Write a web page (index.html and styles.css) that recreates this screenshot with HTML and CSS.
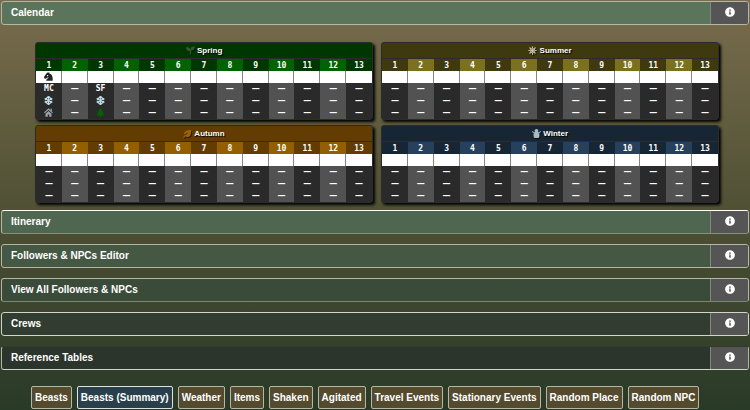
FILE: index.html
```html
<!DOCTYPE html>
<html lang="en">
<head>
<meta charset="utf-8">
<title>Calendar</title>
<link rel="stylesheet" href="styles.css">
</head>
<body>
<svg class="defs" aria-hidden="true">
  <symbol id="info" viewBox="0 0 512 512"><path d="M256 8C119.043 8 8 119.083 8 256c0 136.997 111.043 248 248 248s248-111.003 248-248C504 119.083 392.957 8 256 8zm0 110c23.196 0 42 18.804 42 42s-18.804 42-42 42-42-18.804-42-42 18.804-42 42-42zm56 254c0 6.627-5.373 12-12 12h-88c-6.627 0-12-5.373-12-12v-24c0-6.627 5.373-12 12-12h12v-64h-12c-6.627 0-12-5.373-12-12v-24c0-6.627 5.373-12 12-12h64c6.627 0 12 5.373 12 12v100h12c6.627 0 12 5.373 12 12v24z"/></symbol>
  <symbol id="seedling" viewBox="0 0 512 512"><path d="M64 64H0c0 134 100 234 214 234v160c0 12 7 22 20 22h44c12 0 20-10 20-22V298C298 174 188 64 64 64zm384-32c-84 0-157 46-196 114 28 31 49 68 60 130 113-12 200-118 200-244z"/></symbol>
  <symbol id="sun" viewBox="0 0 24 24"><circle cx="12" cy="12" r="7"/><path fill="none" stroke="currentColor" stroke-width="3" d="M12 1v22M1 12h22M4 4l16 16M20 4L4 20"/><circle cx="12" cy="12" r="5" fill="none" stroke="#3e390f" stroke-width="1"/></symbol>
  <symbol id="leaf" viewBox="0 0 24 24"><path d="M23 1c-3 2-5 1-9 2C6 4 2 8 3 15l9-5 1 1-9 6-4 5 2 2 4-4c7 3 13 1 15-7 1-5 0-8 2-12z"/></symbol>
  <symbol id="snowman" viewBox="0 0 24 24"><path d="M12 0c3 0 5 2 5 5l-1 3 3 1 3-4 2 1-3 5-3 1c2 2 2 3 2 5 0 3-1 5-3 7H7c-2-2-3-4-3-7 0-2 0-3 2-5l-3-1-3-5 2-1 3 4 3-1-1-3c0-3 2-5 5-5z"/></symbol>
  <symbol id="horse" viewBox="0 0 24 24"><path fill-rule="evenodd" d="M15 1l-1 3c6 1 8 6 9 11v8H6c0-4 3-5 7-9l-5 1-3 3-4-1-1-4 5-7c2-4 5-5 10-4zM8 8v3h3V8z"/></symbol>
  <symbol id="snowflake" viewBox="0 0 24 24"><path fill="none" stroke="currentColor" stroke-width="3" d="M12 0v24M2 6l20 12M22 6L2 18M8 2l4 4 4-4M8 22l4-4 4 4M2 10l5-1V4M22 10l-5-1V4M2 14l5 1v5M22 14l-5 1v5"/></symbol>
  <symbol id="house" viewBox="0 0 24 24"><path fill="none" stroke="currentColor" stroke-width="3" d="M1 13L12 3l11 10"/><path d="M17 2h4v7l-4-4zM12 8l8 7v8h-6v-6h-4v6H4v-8z"/></symbol>
  <symbol id="tree" viewBox="0 0 24 24"><path d="M12 0l6 7h-2l4 6h-2l5 7h-9v4h-4v-4H1l5-7H4l4-6H6z"/></symbol>
</svg>

<main>
  <div class="bar calendar-bar">
    <button class="bar-title" type="button">Calendar</button>
    <button class="bar-info" type="button" aria-label="Calendar help"><svg class="info-icon"><use href="#info"/></svg></button>
  </div>

  <section class="seasons">
    <table class="season spring">
      <thead>
        <tr class="season-name"><th colspan="13"><svg class="icon"><use href="#seedling"/></svg> Spring</th></tr>
        <tr class="days"><th>1</th><th>2</th><th>3</th><th>4</th><th>5</th><th>6</th><th>7</th><th>8</th><th>9</th><th>10</th><th>11</th><th>12</th><th>13</th></tr>
      </thead>
      <tbody>
        <tr class="marker"><td><svg class="icon horse"><use href="#horse"/></svg></td><td></td><td></td><td></td><td></td><td></td><td></td><td></td><td></td><td></td><td></td><td></td><td></td></tr>
        <tr><td><span class="code">MC</span></td><td>—</td><td><span class="code">SF</span></td><td>—</td><td>—</td><td>—</td><td>—</td><td>—</td><td>—</td><td>—</td><td>—</td><td>—</td><td>—</td></tr>
        <tr><td><svg class="icon snow"><use href="#snowflake"/></svg></td><td>—</td><td><svg class="icon snow"><use href="#snowflake"/></svg></td><td>—</td><td>—</td><td>—</td><td>—</td><td>—</td><td>—</td><td>—</td><td>—</td><td>—</td><td>—</td></tr>
        <tr><td><svg class="icon house"><use href="#house"/></svg></td><td>—</td><td><svg class="icon tree"><use href="#tree"/></svg></td><td>—</td><td>—</td><td>—</td><td>—</td><td>—</td><td>—</td><td>—</td><td>—</td><td>—</td><td>—</td></tr>
      </tbody>
    </table>

    <table class="season summer">
      <thead>
        <tr class="season-name"><th colspan="13"><svg class="icon"><use href="#sun"/></svg> Summer</th></tr>
        <tr class="days"><th>1</th><th>2</th><th>3</th><th>4</th><th>5</th><th>6</th><th>7</th><th>8</th><th>9</th><th>10</th><th>11</th><th>12</th><th>13</th></tr>
      </thead>
      <tbody>
        <tr class="marker"><td></td><td></td><td></td><td></td><td></td><td></td><td></td><td></td><td></td><td></td><td></td><td></td><td></td></tr>
        <tr><td>—</td><td>—</td><td>—</td><td>—</td><td>—</td><td>—</td><td>—</td><td>—</td><td>—</td><td>—</td><td>—</td><td>—</td><td>—</td></tr>
        <tr><td>—</td><td>—</td><td>—</td><td>—</td><td>—</td><td>—</td><td>—</td><td>—</td><td>—</td><td>—</td><td>—</td><td>—</td><td>—</td></tr>
        <tr><td>—</td><td>—</td><td>—</td><td>—</td><td>—</td><td>—</td><td>—</td><td>—</td><td>—</td><td>—</td><td>—</td><td>—</td><td>—</td></tr>
      </tbody>
    </table>

    <table class="season autumn">
      <thead>
        <tr class="season-name"><th colspan="13"><svg class="icon"><use href="#leaf"/></svg> Autumn</th></tr>
        <tr class="days"><th>1</th><th>2</th><th>3</th><th>4</th><th>5</th><th>6</th><th>7</th><th>8</th><th>9</th><th>10</th><th>11</th><th>12</th><th>13</th></tr>
      </thead>
      <tbody>
        <tr class="marker"><td></td><td></td><td></td><td></td><td></td><td></td><td></td><td></td><td></td><td></td><td></td><td></td><td></td></tr>
        <tr><td>—</td><td>—</td><td>—</td><td>—</td><td>—</td><td>—</td><td>—</td><td>—</td><td>—</td><td>—</td><td>—</td><td>—</td><td>—</td></tr>
        <tr><td>—</td><td>—</td><td>—</td><td>—</td><td>—</td><td>—</td><td>—</td><td>—</td><td>—</td><td>—</td><td>—</td><td>—</td><td>—</td></tr>
        <tr><td>—</td><td>—</td><td>—</td><td>—</td><td>—</td><td>—</td><td>—</td><td>—</td><td>—</td><td>—</td><td>—</td><td>—</td><td>—</td></tr>
      </tbody>
    </table>

    <table class="season winter">
      <thead>
        <tr class="season-name"><th colspan="13"><svg class="icon"><use href="#snowman"/></svg> Winter</th></tr>
        <tr class="days"><th>1</th><th>2</th><th>3</th><th>4</th><th>5</th><th>6</th><th>7</th><th>8</th><th>9</th><th>10</th><th>11</th><th>12</th><th>13</th></tr>
      </thead>
      <tbody>
        <tr class="marker"><td></td><td></td><td></td><td></td><td></td><td></td><td></td><td></td><td></td><td></td><td></td><td></td><td></td></tr>
        <tr><td>—</td><td>—</td><td>—</td><td>—</td><td>—</td><td>—</td><td>—</td><td>—</td><td>—</td><td>—</td><td>—</td><td>—</td><td>—</td></tr>
        <tr><td>—</td><td>—</td><td>—</td><td>—</td><td>—</td><td>—</td><td>—</td><td>—</td><td>—</td><td>—</td><td>—</td><td>—</td><td>—</td></tr>
        <tr><td>—</td><td>—</td><td>—</td><td>—</td><td>—</td><td>—</td><td>—</td><td>—</td><td>—</td><td>—</td><td>—</td><td>—</td><td>—</td></tr>
      </tbody>
    </table>
  </section>

  <div class="bars">
    <div class="bar itinerary-bar">
      <button class="bar-title" type="button">Itinerary</button>
      <button class="bar-info" type="button" aria-label="Itinerary help"><svg class="info-icon"><use href="#info"/></svg></button>
    </div>
    <div class="bar editor-bar">
      <button class="bar-title" type="button">Followers &amp; NPCs Editor</button>
      <button class="bar-info" type="button" aria-label="Editor help"><svg class="info-icon"><use href="#info"/></svg></button>
    </div>
    <div class="bar view-bar">
      <button class="bar-title" type="button">View All Followers &amp; NPCs</button>
      <button class="bar-info" type="button" aria-label="Followers help"><svg class="info-icon"><use href="#info"/></svg></button>
    </div>
    <div class="bar crews-bar">
      <button class="bar-title" type="button">Crews</button>
      <button class="bar-info" type="button" aria-label="Crews help"><svg class="info-icon"><use href="#info"/></svg></button>
    </div>
    <div class="bar tables-bar">
      <button class="bar-title" type="button">Reference Tables</button>
      <button class="bar-info" type="button" aria-label="Reference help"><svg class="info-icon"><use href="#info"/></svg></button>
    </div>
  </div>

  <nav class="tabs">
    <button class="tab" type="button">Beasts</button>
    <button class="tab active" type="button">Beasts (Summary)</button>
    <button class="tab" type="button">Weather</button>
    <button class="tab" type="button">Items</button>
    <button class="tab" type="button">Shaken</button>
    <button class="tab" type="button">Agitated</button>
    <button class="tab" type="button">Travel Events</button>
    <button class="tab" type="button">Stationary Events</button>
    <button class="tab" type="button">Random Place</button>
    <button class="tab" type="button">Random NPC</button>
  </nav>
</main>
</body>
</html>
```
FILE: styles.css
```css
* {
  box-sizing: border-box;
}

html {
  min-height: 100%;
  background: linear-gradient(#796d4d, #4f5034 52%, #293a27);
}

body {
  margin: 0;
  padding: 1px 1px 0;
  font: bold 10px/12px "Liberation Sans", Arial, sans-serif;
  color: #fff;
}

button {
  font: inherit;
  color: inherit;
  cursor: pointer;
}

.defs {
  display: none;
}

.bar {
  display: flex;
  height: 24px;
  border: 1px solid #b5b7a5;
  border-radius: 3px;
  overflow: hidden;
}

.bar-title {
  flex: 1;
  padding: 0 9px;
  border: 0;
  background: none;
  text-align: left;
}

.bar-info {
  display: flex;
  align-items: center;
  justify-content: center;
  width: 38px;
  padding: 0 0 2px;
  border: 0;
  border-left: 1px solid #7d8a7a;
  background: #555;
}

.info-icon {
  width: 10px;
  height: 10px;
  fill: #fff;
}

.bars {
  display: flex;
  flex-direction: column;
  gap: 10px;
}

.calendar-bar { background: #5b755c; }
.itinerary-bar { background: #4f6750; border-top-color: #fff; border-bottom-color: #84927b; }
.editor-bar { background: #445844; }
.view-bar { background: #3b4b39; border-bottom-color: #7b8773; }
.crews-bar { background: #313d31; border-color: #d0d6ca; }
.tables-bar { background: #2c352b; border-top-color: #323b2c; border-bottom-color: #d0d6ca; }

.seasons {
  display: grid;
  grid-template-columns: 1fr 1fr;
  gap: 5px 8px;
  padding: 17px 30px 7px 34px;
}

.season {
  width: 100%;
  table-layout: fixed;
  border-collapse: separate;
  border-spacing: 0;
  border: 1px solid #2c2c2c;
  border-radius: 3px;
  overflow: hidden;
  background: #2c2c2c;
  box-shadow: 2px 2px 3px #000;
}

.season th,
.season td {
  height: 12px;
  padding: 0;
  font: bold 8px/10px "DejaVu Sans Mono", monospace;
  text-align: center;
  vertical-align: middle;
}

.season td {
  font-family: "DejaVu Sans", sans-serif;
}

.season .code {
  font-family: "DejaVu Sans Mono", monospace;
}

.season .season-name th {
  height: 16px;
  border-bottom: 1px solid #2c2c2c;
  background: var(--dark);
  font: bold 8px/10px "Liberation Sans", Arial, sans-serif;
  text-shadow: 1px 1px 1px #000;
}

.season .days th {
  padding-top: 1px;
  background: var(--dark);
}

.season .days th:nth-child(even) {
  background: var(--light);
}

.season td { background: #2a2a2a; }
.season td:nth-child(even) { background: #525252; }

.season .marker td {
  border-right: 1px solid #85877c;
  background: #fff;
}

.season .marker td:last-child {
  border-right-color: #fff;
}

.spring { --dark: #003600; --light: #006200; }
.summer { --dark: #3e390f; --light: #7a701e; }
.autumn { --dark: #623c00; --light: #945f00; }
.winter { --dark: #162635; --light: #27415d; }

.icon {
  display: inline-block;
  width: 9px;
  height: 9px;
  vertical-align: -2px;
  fill: currentColor;
}

.season-name .icon { filter: drop-shadow(1px 1px 0 #0008); }
.spring .season-name .icon { color: #2f5a32; }
.summer .season-name .icon { color: #c9c2aa; }
.autumn .season-name .icon { color: #a25f08; }
.winter .season-name .icon { color: #a5bcc0; }

.horse { color: #222; }
.snow { color: #bfdde6; }
.house { color: #9aa5a9; }
.tree { color: #006200; }

.tabs {
  display: flex;
  flex-wrap: wrap;
  gap: 5px;
  padding: 16px 0 0 30px;
}

.tab {
  height: 23px;
  padding: 0 3px;
  border: 1px solid #b5b7a5;
  border-radius: 2px;
  background: #544a2e;
  white-space: nowrap;
}

.tab.active {
  border-color: #dce2e2;
  background: #293f4b;
}
```
